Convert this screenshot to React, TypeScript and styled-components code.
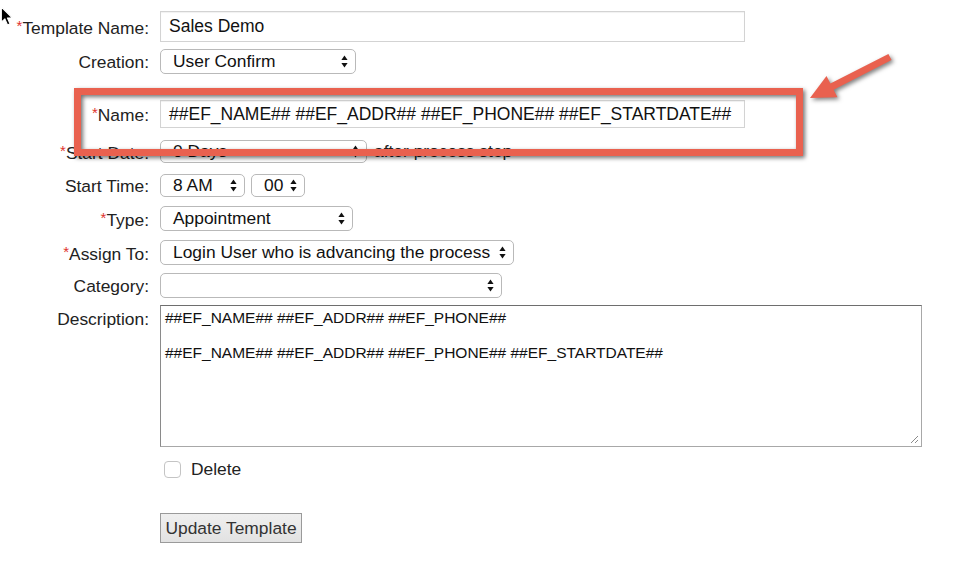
import React from "react";
import styled, { createGlobalStyle } from "styled-components";

const Global = createGlobalStyle`
  html, body {
    margin: 0;
    padding: 0;
    background: #ffffff;
  }
  body {
    font-family: "Liberation Sans", Arial, Helvetica, sans-serif;
    color: #222;
  }
`;

const Page = styled.div`
  position: relative;
  width: 974px;
  height: 572px;
  overflow: hidden;
  padding-top: 11px;
  box-sizing: border-box;
`;

const Form = styled.form`
  display: flex;
  flex-direction: column;
`;

const Row = styled.div<{ $gap: number; $top?: boolean }>`
  display: flex;
  align-items: ${(p) => (p.$top ? "flex-start" : "center")};
  column-gap: 11px;
  margin-top: ${(p) => p.$gap}px;
`;

const Label = styled.label<{ $pad?: number }>`
  width: 149px;
  flex: none;
  text-align: right;
  font-size: 17.4px;
  line-height: 20px;
  color: #222;
  padding-top: ${(p) => p.$pad ?? 0}px;
  white-space: nowrap;
`;

const Req = styled.span`
  color: #e0322c;
  font-size: 15px;
  vertical-align: 3px;
`;

const TextBox = styled.div<{ $h: number }>`
  width: 585px;
  height: ${(p) => p.$h}px;
  box-sizing: border-box;
  border: 1px solid #d3d3d3;
  box-shadow: inset 0 1px 1px rgba(0, 0, 0, 0.06);
  display: flex;
  align-items: center;
  padding-left: 8px;
  font-size: 17.5px;
  color: #111;
  white-space: nowrap;
  background: #fff;
`;

const SelectBox = styled.div<{ $w: number; $h?: number }>`
  width: ${(p) => p.$w}px;
  height: ${(p) => p.$h ?? 25}px;
  box-sizing: border-box;
  border: 1px solid #b9b9b9;
  border-radius: 5px;
  background: #fff;
  display: flex;
  align-items: center;
  justify-content: space-between;
  padding: 0 7px 0 12px;
  font-size: 17.4px;
  color: #111;
  white-space: nowrap;
  flex: none;
`;

const SelectPair = styled.div`
  display: flex;
  gap: 6px;
`;

const After = styled.span`
  font-size: 17.4px;
  color: #222;
  margin-left: -4px;
`;

const TextArea = styled.div`
  position: relative;
  width: 762px;
  height: 142px;
  box-sizing: border-box;
  border: 1px solid #a8a8a8;
  border-top-color: #6e6e6e;
  border-left-color: #8a8a8a;
  padding: 3px 4px;
  font-size: 15.5px;
  line-height: 18px;
  color: #111;
`;

const DescLine = styled.div<{ $gap?: number }>`
  margin-top: ${(p) => p.$gap ?? 0}px;
  white-space: nowrap;
`;

const Grip = styled.svg`
  position: absolute;
  right: 2px;
  bottom: 2px;
`;

const CheckRow = styled.div`
  display: flex;
  align-items: center;
  margin: 12px 0 0 164px;
  gap: 10px;
  font-size: 17.4px;
  color: #222;
`;

const Check = styled.span`
  width: 17px;
  height: 17px;
  box-sizing: border-box;
  border: 1px solid #c4c4c4;
  border-radius: 4px;
  background: #fff;
`;

const Button = styled.button`
  margin: 33px 0 0 160px;
  align-self: flex-start;
  width: 142px;
  height: 30px;
  box-sizing: border-box;
  border: 1px solid #9a9a9a;
  background: linear-gradient(#efefef, #e2e2e2);
  font-family: "Liberation Sans", Arial, sans-serif;
  font-size: 17.4px;
  color: #333;
  padding: 0;
`;

const Callout = styled.div`
  position: absolute;
  left: 74px;
  top: 88px;
  width: 729px;
  height: 68px;
  box-sizing: border-box;
  border: 7px solid #e9614f;
  filter: drop-shadow(2px 2px 2px rgba(0, 0, 0, 0.55));
  pointer-events: none;
`;

const Arrow = styled.svg`
  position: absolute;
  left: 800px;
  top: 45px;
  filter: drop-shadow(2px 2px 2px rgba(0, 0, 0, 0.5));
`;

const Pointer = styled.svg`
  position: absolute;
  left: 0;
  top: 6px;
`;

const Updown = () => (
  <svg width="7" height="13" viewBox="0 0 7 13">
    <path d="M3.5 0.5 L6.6 5 L0.4 5 Z" fill="#111" />
    <path d="M3.5 12.5 L6.6 8 L0.4 8 Z" fill="#111" />
  </svg>
);

type SelectProps = { w: number; h?: number; value?: string };
const Select = ({ w, h, value = "" }: SelectProps) => (
  <SelectBox $w={w} $h={h}>
    <span>{value}</span>
    <Updown />
  </SelectBox>
);

const Field = ({
  label,
  required,
  gap,
  children,
}: {
  label: string;
  required?: boolean;
  gap: number;
  children: React.ReactNode;
}) => (
  <Row $gap={gap}>
    <Label>
      {required && <Req>*</Req>}
      {label}
    </Label>
    {children}
  </Row>
);

export default function App() {
  const tokens = "##EF_NAME## ##EF_ADDR## ##EF_PHONE##";
  return (
    <Page>
      <Global />
      <Form onSubmit={(e) => e.preventDefault()}>
        <Field label="Template Name:" required gap={0}>
          <TextBox $h={31}>Sales Demo</TextBox>
        </Field>
        <Field label="Creation:" gap={7}>
          <Select w={196} value="User Confirm" />
        </Field>
        <Field label="Name:" required gap={26}>
          <TextBox $h={28}>{tokens} ##EF_STARTDATE##</TextBox>
        </Field>
        <Field label="Start Date:" required gap={12}>
          <Select w={207} h={23} value="0 Days" />
          <After>after process step</After>
        </Field>
        <Field label="Start Time:" gap={11}>
          <SelectPair>
            <Select w={85} h={23} value="8 AM" />
            <Select w={54} h={23} value="00" />
          </SelectPair>
        </Field>
        <Field label="Type:" required gap={9}>
          <Select w={193} value="Appointment" />
        </Field>
        <Field label="Assign To:" required gap={9}>
          <Select w={354} value="Login User who is advancing the process" />
        </Field>
        <Field label="Category:" gap={8}>
          <Select w={342} />
        </Field>
        <Row $gap={7} $top>
          <Label $pad={4}>Description:</Label>
          <TextArea>
            <DescLine>{tokens}</DescLine>
            <DescLine $gap={17}>{tokens} ##EF_STARTDATE##</DescLine>
            <Grip width="10" height="10" viewBox="0 0 10 10">
              <path d="M9 2 L2 9 M9 6 L6 9" stroke="#8a8a8a" strokeWidth="1" />
            </Grip>
          </TextArea>
        </Row>
        <CheckRow>
          <Check />
          <span>Delete</span>
        </CheckRow>
        <Button type="submit">Update Template</Button>
      </Form>

      <Callout />
      <Arrow width="100" height="70" viewBox="0 0 100 70">
        <polygon
          points="10,53 26.5,30.9 30.4,38.5 88.4,8.9 91.6,15.1 33.6,44.7 37.5,52.3"
          fill="#e9614f"
        />
      </Arrow>
      <Pointer width="16" height="20" viewBox="0 0 14 18">
        <path
          d="M1 1 L1 14.5 L4.2 11.6 L6.6 17 L8.8 16 L6.5 10.8 L10.8 10.6 Z"
          fill="#000"
          stroke="#fff"
          strokeWidth="1"
          strokeLinejoin="round"
        />
      </Pointer>
    </Page>
  );
}
